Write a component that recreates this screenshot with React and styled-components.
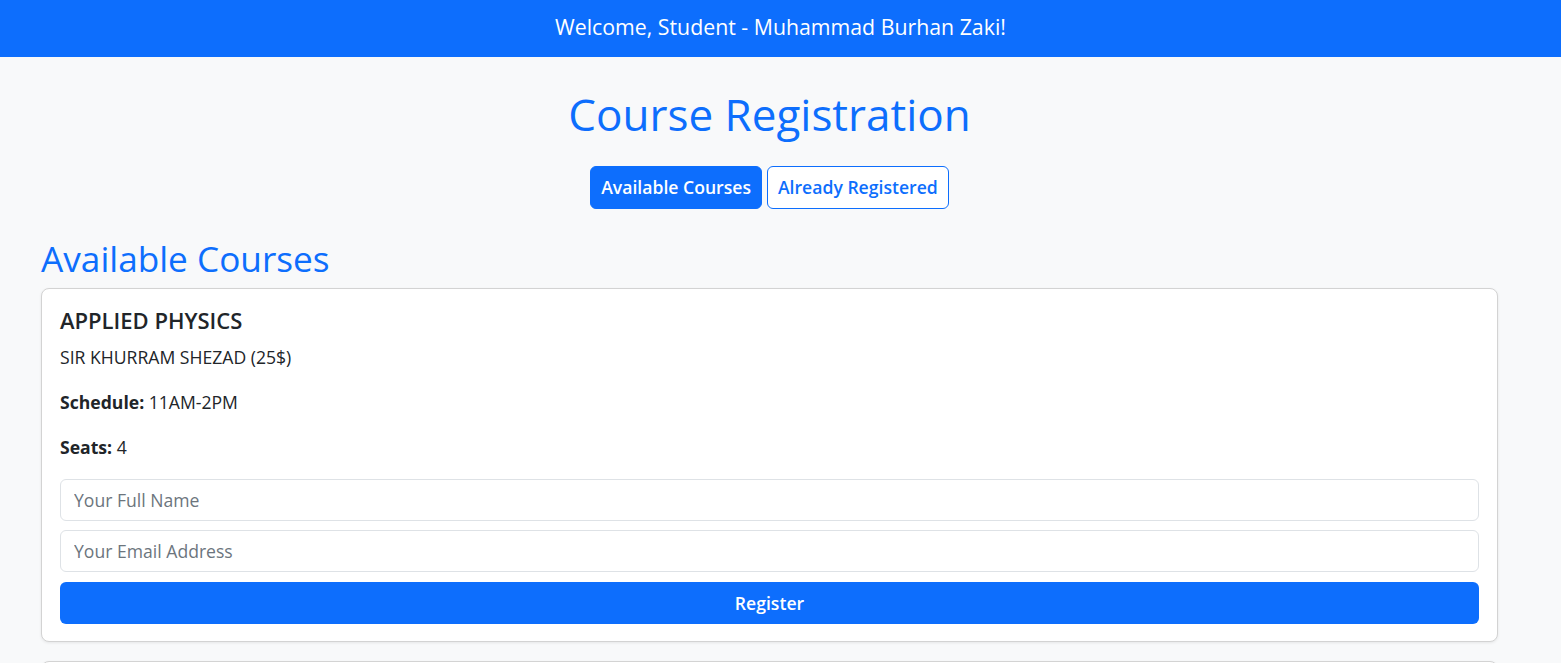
import React from 'react';
import styled, { createGlobalStyle } from 'styled-components';

const GlobalStyle = createGlobalStyle`
  * {
    box-sizing: border-box;
  }

  body {
    margin: 0;
    background: #f8f9fa;
    color: #212529;
    font-family: "Open Sans", "Noto Sans", sans-serif;
    font-size: 17.6px;
    line-height: 1.5;
  }
`;

const Header = styled.header`
  height: 57px;
  background: #0d6efd;
  color: #fff;
  display: flex;
  align-items: center;
  justify-content: center;
  padding-bottom: 3px;
  font-size: 21.3px;
`;

const Main = styled.main`
  padding: 0 63px 0 41px;
`;

const Title = styled.h1`
  margin: 30.6px 0 25.6px;
  text-align: center;
  color: #0d6efd;
  font-size: 44px;
  font-weight: 500;
  line-height: 1.2;
`;

const Tabs = styled.div`
  display: flex;
  justify-content: center;
  gap: 5px;
`;

const TabButton = styled.button`
  height: 43px;
  padding: 0 10px;
  border: 1px solid #0d6efd;
  border-radius: 6px;
  background: ${p => (p.active ? '#0d6efd' : '#fff')};
  color: ${p => (p.active ? '#fff' : '#0d6efd')};
  font-family: inherit;
  font-size: 17.6px;
  font-weight: 600;
  cursor: pointer;
`;

const SectionTitle = styled.h2`
  margin: 28px 0 9px;
  color: #0d6efd;
  font-size: 35.2px;
  font-weight: 500;
  line-height: 1.2;
`;

const Card = styled.div`
  background: #fff;
  border: 1px solid #d3d3d3;
  border-radius: 8px;
  box-shadow: 0 1px 3px rgba(0, 0, 0, 0.08);
  padding: 18px 18px 17px;
  margin-bottom: 19px;
`;

const CourseName = styled.h5`
  margin: 0 0 10.8px;
  font-size: 22px;
  font-weight: 600;
  line-height: 1.2;
`;

const Line = styled.p`
  margin: 0 0 18.6px;
`;

const Form = styled.form`
  display: flex;
  flex-direction: column;
  gap: 9px;
`;

const Input = styled.input`
  height: 42px;
  padding: 0 13px;
  border: 1px solid #dee2e6;
  border-radius: 6px;
  font-family: inherit;
  font-size: 17.6px;
  color: #212529;

  &::placeholder {
    color: #6c757d;
  }
`;

const Submit = styled.button`
  height: 42px;
  margin-top: 1px;
  border: none;
  border-radius: 6px;
  background: #0d6efd;
  color: #fff;
  font-family: inherit;
  font-size: 17.6px;
  font-weight: 600;
`;

const courses = [
  { name: 'APPLIED PHYSICS', teacher: 'SIR KHURRAM SHEZAD', fee: 25, schedule: '11AM-2PM', seats: 4 },
  { name: 'CALCULUS', teacher: 'SIR AHMED RAZA', fee: 30, schedule: '9AM-11AM', seats: 6 },
];

export default () => (
  <>
    <GlobalStyle />
    <Header>Welcome, Student - Muhammad Burhan Zaki!</Header>
    <Main>
      <Title>Course Registration</Title>
      <Tabs>
        <TabButton active>Available Courses</TabButton>
        <TabButton>Already Registered</TabButton>
      </Tabs>
      <SectionTitle>Available Courses</SectionTitle>
      {courses.map(course => (
        <Card key={course.name}>
          <CourseName>{course.name}</CourseName>
          <Line>{course.teacher} ({course.fee}$)</Line>
          <Line><strong>Schedule:</strong> {course.schedule}</Line>
          <Line><strong>Seats:</strong> {course.seats}</Line>
          <Form onSubmit={e => e.preventDefault()}>
            <Input placeholder="Your Full Name" />
            <Input type="email" placeholder="Your Email Address" />
            <Submit type="submit">Register</Submit>
          </Form>
        </Card>
      ))}
    </Main>
  </>
);
